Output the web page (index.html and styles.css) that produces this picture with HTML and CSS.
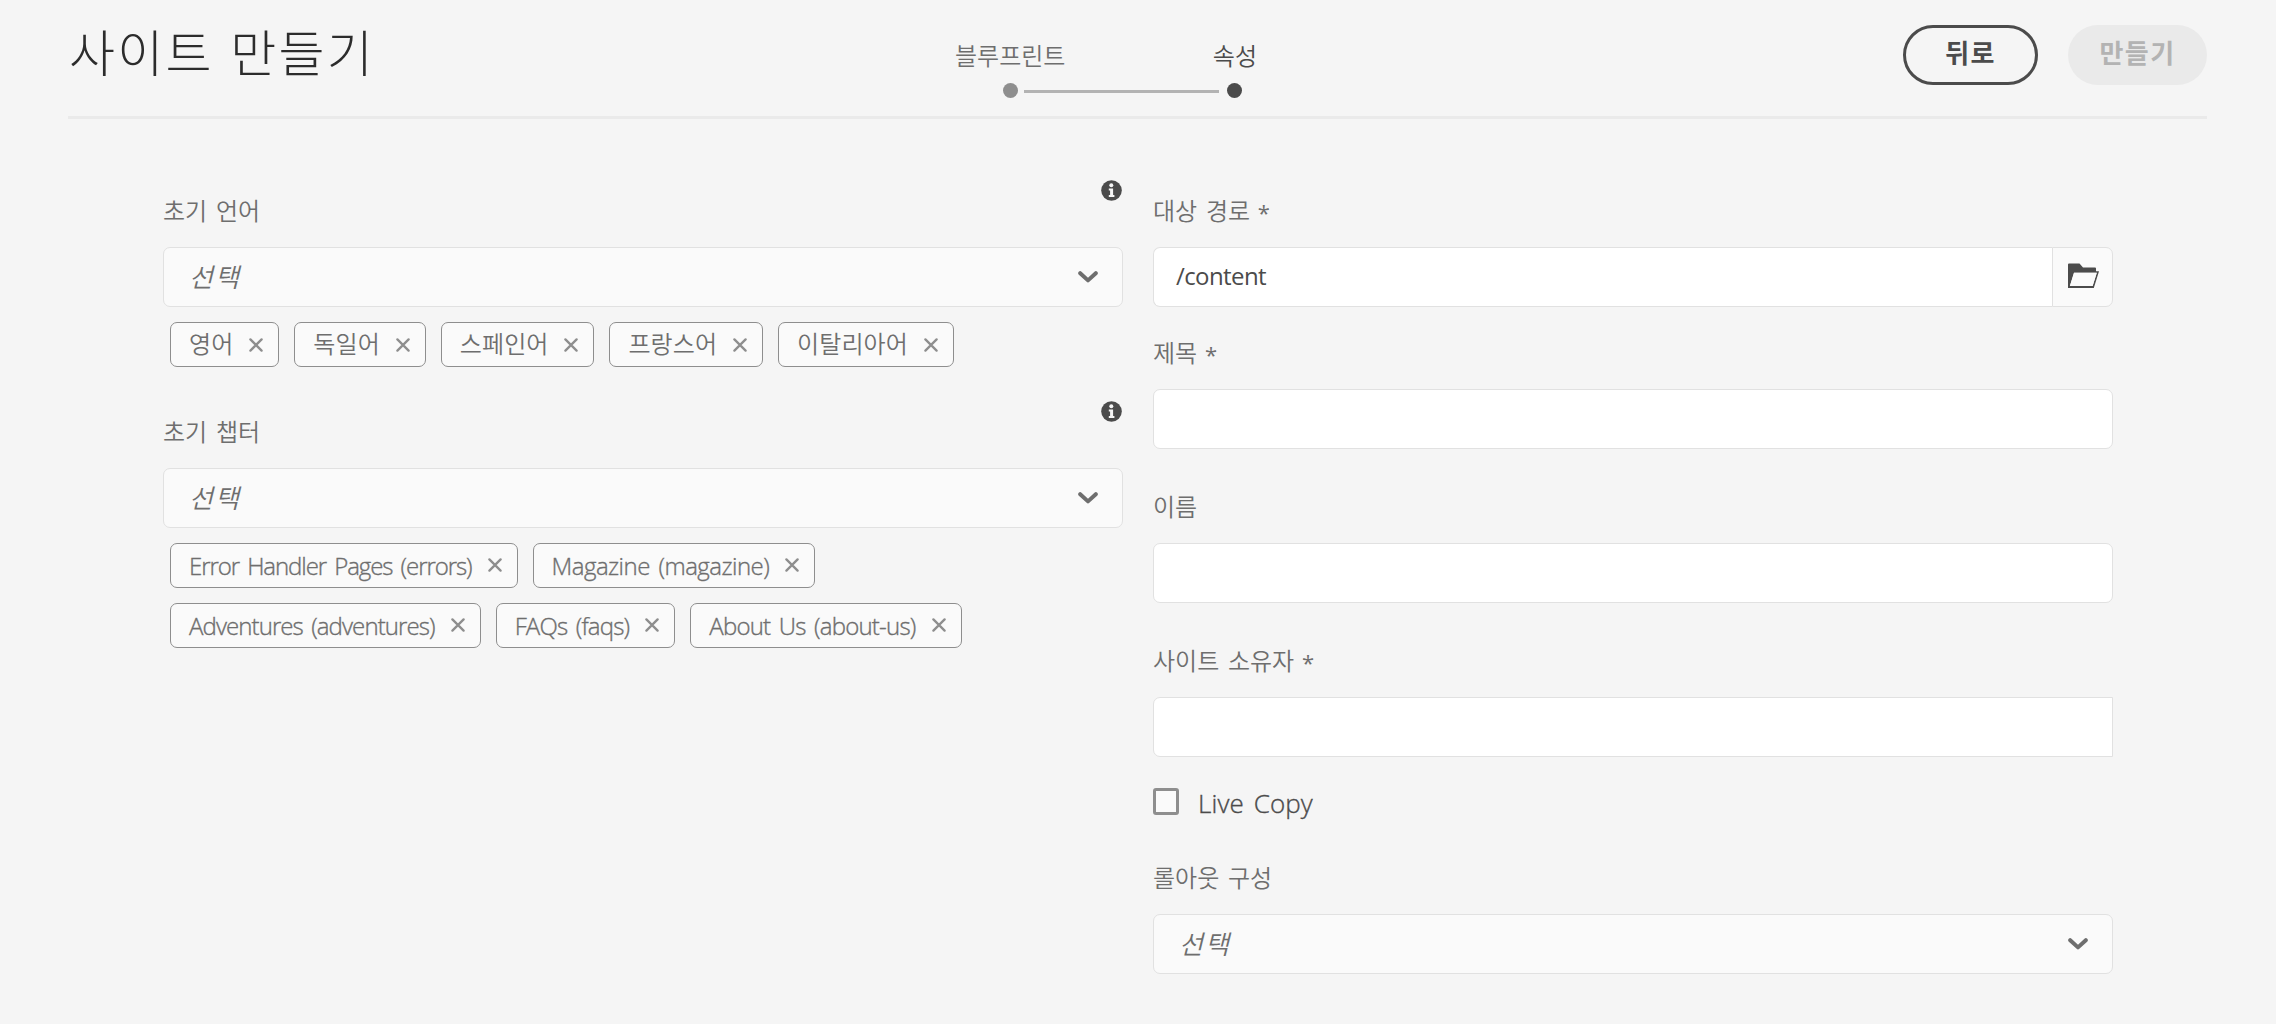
FILE: index.html
```html
<!DOCTYPE html>
<html lang="ko">
<head>
<meta charset="utf-8">
<title>사이트 만들기</title>
<link rel="stylesheet" href="styles.css">
</head>
<body>
<svg class="defs" aria-hidden="true">
  <symbol id="info" viewBox="0 0 21 21"><circle cx="10.5" cy="10.5" r="10.3" fill="#4b4b4b"/><circle cx="10.3" cy="5.2" r="2" fill="#f5f5f5"/><path d="M7.800 8.600h4.300v6.400h1.300v2H7.800v-2h1.300v-4.400H7.800z" fill="#f5f5f5"/></symbol>
  <symbol id="chevron" viewBox="0 0 20 12"><path d="M2.200 2.200L10 9.400L17.800 2.200" fill="none" stroke="#6e6e6e" stroke-width="4" stroke-linecap="round" stroke-linejoin="round"/></symbol>
  <symbol id="cross" viewBox="0 0 14 14"><path d="M1.400 1.400L12.600 12.600M12.600 1.400L1.400 12.600" fill="none" stroke="#8e8e8e" stroke-width="2.300" stroke-linecap="round"/></symbol>
  <symbol id="folder" viewBox="0 0 31 26"><path fill="#4b4b4b" fill-rule="evenodd" d="M0 1.500Q0 .500 1 .500H11.500L15 4.500H27Q28 4.500 28 5.500V8.200H31L25.800 25H0ZM6 9.800L1.900 23H24.600L28.800 9.800Z"/><path d="M6 9.800L1.900 23H24.600L28.800 9.800Z" fill="#fafafa"/></symbol>
</svg>
<header class="header">
  <h1 class="title">사이트 만들기</h1>
  <ol class="steps">
    <li class="step step-done"><span class="step-label">블루프린트</span><i class="dot"></i></li>
    <li class="step-line"></li>
    <li class="step step-current"><span class="step-label">속성</span><i class="dot"></i></li>
  </ol>
  <div class="actions">
    <button class="btn btn-back">뒤로</button>
    <button class="btn btn-create" disabled>만들기</button>
  </div>
</header>
<main class="form">
  <section class="column">
    <div class="field">
      <div class="label"><span>초기 언어</span><svg class="info"><use href="#info"/></svg></div>
      <div class="select"><span class="placeholder">선택</span><svg class="chevron"><use href="#chevron"/></svg></div>
      <div class="tags tags-hangul">
        <span class="tag"><span>영어</span><svg><use href="#cross"/></svg></span>
        <span class="tag"><span>독일어</span><svg><use href="#cross"/></svg></span>
        <span class="tag"><span>스페인어</span><svg><use href="#cross"/></svg></span>
        <span class="tag"><span>프랑스어</span><svg><use href="#cross"/></svg></span>
        <span class="tag"><span>이탈리아어</span><svg><use href="#cross"/></svg></span>
      </div>
    </div>
    <div class="field field-chapters">
      <div class="label"><span>초기 챕터</span><svg class="info"><use href="#info"/></svg></div>
      <div class="select"><span class="placeholder">선택</span><svg class="chevron"><use href="#chevron"/></svg></div>
      <div class="tags tags-latin">
        <span class="tag tag-errors"><span>Error Handler Pages (errors)</span><svg><use href="#cross"/></svg></span>
        <span class="tag tag-magazine"><span>Magazine (magazine)</span><svg><use href="#cross"/></svg></span>
        <span class="tag tag-adventures"><span>Adventures (adventures)</span><svg><use href="#cross"/></svg></span>
        <span class="tag tag-faqs"><span>FAQs (faqs)</span><svg><use href="#cross"/></svg></span>
        <span class="tag tag-about"><span>About Us (about-us)</span><svg><use href="#cross"/></svg></span>
      </div>
    </div>
  </section>
  <section class="column">
    <div class="field">
      <div class="label"><span>대상 경로 <b>*</b></span></div>
      <div class="path"><div class="input path-input">/content</div><button class="browse"><svg><use href="#folder"/></svg></button></div>
    </div>
    <div class="field field-title">
      <div class="label"><span>제목 <b>*</b></span></div>
      <div class="input"></div>
    </div>
    <div class="field field-name">
      <div class="label"><span>이름</span></div>
      <div class="input"></div>
    </div>
    <div class="field field-name">
      <div class="label"><span>사이트 소유자 <b>*</b></span></div>
      <div class="input input-square"></div>
    </div>
    <label class="check"><span class="box"></span><span class="check-label">Live Copy</span></label>
    <div class="field field-rollout">
      <div class="label"><span>롤아웃 구성</span></div>
      <div class="select"><span class="placeholder">선택</span><svg class="chevron"><use href="#chevron"/></svg></div>
    </div>
  </section>
</main>
</body>
</html>
```
FILE: styles.css
```css
* { box-sizing: border-box; }
body {
  margin: 0;
  min-height: 1024px;
  background: #f5f5f5;
  color: #4b4b4b;
  font-family: "Open Sans", "Noto Sans CJK KR", sans-serif;
  font-size: 24px;
  font-weight: 350;
}
.defs { display: none; }
svg { display: block; flex: none; }
.header {
  display: grid;
  grid-template-columns: 887px 301px 1fr;
  width: 2139px;
  height: 119px;
  margin-left: 68px;
  border-bottom: 3px solid #eaeaea;
}
.title {
  margin: 0;
  padding: 13px 0 0 1px;
  color: #2c2c2c;
  font-family: "Noto Sans CJK KR", sans-serif;
  font-size: 50px;
  font-weight: 300;
  line-height: 74px;
  letter-spacing: 2.300px;
}
.steps { display: flex; margin: 0; padding: 0; list-style: none; height: 116px; }
.step { display: flex; flex-direction: column; align-items: center; padding-top: 37px; }
.step-label {
  font-family: "Noto Sans CJK KR", sans-serif;
  line-height: 36px;
  height: 46px;
  white-space: nowrap;
}
.step-done { width: 111px; color: #6e6e6e; }
.step-current { width: 43px; }
.dot { width: 15px; height: 15px; border-radius: 50%; background: #4b4b4b; }
.step-done .dot { background: #8e8e8e; }
.step-line { flex: none; width: 195px; height: 3px; margin: 90px -6px 0 -41px; background: #b3b3b3; }
.actions { display: flex; justify-content: flex-end; gap: 30px; padding-top: 25px; }
.btn {
  height: 60px;
  padding: 0 0 6px;
  border-radius: 30px;
  font: 700 26px/48px "Noto Sans CJK KR", sans-serif;
  letter-spacing: 1.400px;
}
.btn-back { width: 135px; border: 3px solid #4b4b4b; background: transparent; color: #4b4b4b; }
.btn-create { width: 139px; border: 0; background: #eaeaea; color: #b3b3b3; }
.form { display: grid; grid-template-columns: 960px 960px; gap: 30px; margin: 61px 0 0 163px; }
.label {
  display: flex;
  justify-content: space-between;
  height: 67px;
  color: #6e6e6e;
  font-family: "Noto Sans CJK KR", sans-serif;
  line-height: 36px;
  word-spacing: 2px;
}
.label > span { padding-top: 12px; }
.label b { margin-left: -1px; font: 400 22px/22px "Open Sans", sans-serif; vertical-align: -1px; }
.info { width: 21px; height: 21px; margin-right: 1px; }
.select, .input {
  display: flex;
  align-items: center;
  height: 60px;
  border: 1px solid #e1e1e1;
  border-radius: 7px;
  background: #fff;
}
.select { justify-content: space-between; padding: 0 24px 0 25px; background: #fafafa; }
.placeholder {
  padding-bottom: 4px;
  color: #6e6e6e;
  font-family: "Noto Sans CJK KR", sans-serif;
  font-size: 26px;
  font-style: italic;
  letter-spacing: 2px;
}
.chevron { width: 20px; height: 12px; margin-bottom: 1px; }
.tags { display: flex; flex-wrap: wrap; gap: 15px; padding: 15px 120px 0 7px; }
.tag {
  display: flex;
  align-items: center;
  gap: 16px;
  height: 45px;
  padding: 0 15px 0 18px;
  border: 1px solid #8e8e8e;
  border-radius: 7px;
  background: #fafafa;
  color: #6e6e6e;
  white-space: nowrap;
}
.tag svg { width: 14px; height: 14px; }
.tags-hangul .tag { letter-spacing: .080px; }
.tags-hangul .tag > span { padding-bottom: 4px; }
.tags-latin .tag { word-spacing: 3px; -webkit-text-stroke: .350px #6e6e6e; }
.tags-latin .tag svg { margin-bottom: 1px; }
.tag-errors { letter-spacing: -1.070px; }
.tag-magazine { letter-spacing: -.530px; }
.tag-adventures { letter-spacing: -.910px; }
.tag-faqs { letter-spacing: -.820px; }
.tag-about { letter-spacing: -.790px; }
.field-chapters { margin-top: 34px; }
.path { display: grid; grid-template-columns: 899px 61px; }
.path-input { padding: 0 0 3px 22px; border-right: 0; border-radius: 7px 0 0 7px; font-weight: 400; letter-spacing: -.600px; }
.browse { height: 60px; padding: 0 0 0 15px; border: 1px solid #e1e1e1; border-radius: 0 7px 7px 0; background: #fafafa; }
.browse svg { width: 31px; height: 26px; margin-bottom: 3px; }
.field-title { margin-top: 15px; }
.field-name { margin-top: 27px; }
.input-square { border-radius: 7px 0 0 7px; }
.check { display: flex; gap: 19px; margin-top: 31px; height: 27px; font-size: 26px; -webkit-text-stroke: .350px #4b4b4b; }
.box { width: 26px; height: 27px; border: 3px solid #8e8e8e; border-radius: 3px; background: #fafafa; }
.check-label { line-height: 31px; word-spacing: 3px; letter-spacing: .100px; }
.field-rollout { margin-top: 32px; }
```
